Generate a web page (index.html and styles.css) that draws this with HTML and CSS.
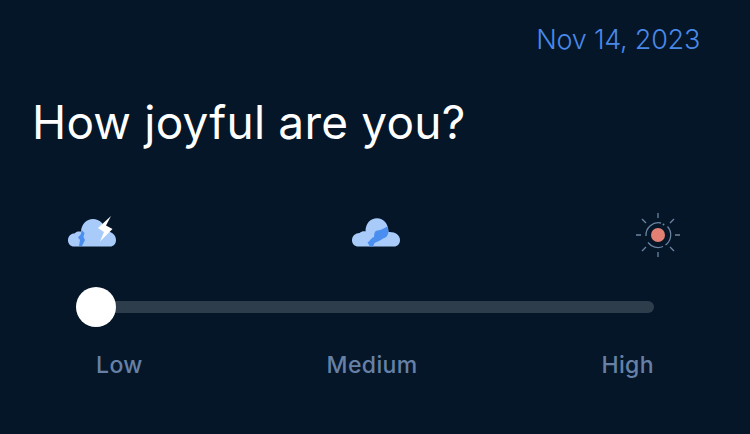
FILE: index.html
```html
<!DOCTYPE html>
<html lang="en">
  <head>
    <meta charset="UTF-8" />
    <meta name="viewport" content="width=device-width, initial-scale=1.0" />
    <title>Daily Mood</title>
    <link rel="stylesheet" href="styles.css">
  </head>
  <body>
    <div class="mood-card">
      <div class="date"><span>Nov 14, 2023</span></div>
      <h1 class="question"><span>How joyful are you?</span></h1>
      <div class="icons">
        <svg class="cloud" viewBox="0 0 48 32">
          <path d="M6 30.500C2.500 30.500 0 27.800 0 24.200C0 20.300 3 17.200 7 17.200C8 15.500 10 15.200 13 15.600C13.500 8 18.500 3 25 3C31.500 3 37 8 37.500 15C43 15 48 18.500 48 24C48 28 45.500 30.500 42 30.500Z" fill="#a9cbfa" />
          <path d="M13.500 14L13 18L10 21.500L12 24L11 30H14L17 24L15.500 21L16.500 17Z" fill="#4a8ff0" />
          <path d="M43 0L30 12L36 16L32 25.500L44.500 13L38 9.500Z" fill="#fff" />
        </svg>
        <svg class="cloud" viewBox="0 0 48 32">
          <path d="M6.500 30.500C2.500 30.500 0 27.800 0 24.200C0 20 3.500 17 7.500 17C9.500 15.200 11.500 15 13.500 15.400C13.500 7.500 18.500 2.300 25 2.300C31.500 2.300 36.500 8 36.500 16C43 15.500 48 19 48 24C48 28 45.500 30.500 42 30.500Z" fill="#a9cbfa" />
          <path d="M35.500 10.500C32 12 29 14.500 25.500 14.500C22 15 22.500 18 22 21C19 22 18 25 15.500 26.500L18 30.500H21L22.500 27L28 24.500L31 22.500C34 22 36 19.500 36.500 16Z" fill="#4a8ff0" />
        </svg>
        <svg class="sun" viewBox="0 0 44 44">
          <g fill="none" stroke="#6b84a0" stroke-width="1.300">
            <path d="M22 0V5M22 39V44M0 22H5M39 22H44M6 6L10 10M34 34L38 38M6 38L10 34M34 10L38 6" />
            <path d="M10 23A12.500 12.500 0 0 1 25 10M31.500 13.500A12.500 12.500 0 0 1 29.500 32M27 33.500A12.500 12.500 0 0 1 12 29.500" />
          </g>
          <circle cx="27.500" cy="11.500" r="1" fill="#6b84a0" />
          <circle cx="22" cy="22" r="7" fill="#e28074" />
        </svg>
      </div>
      <input class="slider" type="range" min="0" max="100" value="0" aria-label="Joy" />
      <div class="labels">
        <span class="low">Low</span>
        <span class="medium">Medium</span>
        <span class="high">High</span>
      </div>
    </div>
  </body>
</html>
```
FILE: styles.css
```css
body {
  font-family: Inter, "Liberation Sans", sans-serif;
  background-color: #041628;
  margin: 0;
}

.mood-card {
  box-sizing: border-box;
  height: 434px;
  padding: 20px 50px 0 32px;
  overflow: hidden;
}

.date {
  height: 40px;
  line-height: 40px;
  font-size: 27px;
  font-weight: 300;
  letter-spacing: -0.25px;
  text-align: right;
  color: #4a88e8;
}

.question {
  height: 60px;
  line-height: 60px;
  margin: 32px 0 0;
  font-size: 46px;
  font-weight: 400;
  letter-spacing: 0.2px;
  white-space: nowrap;
  color: #fff;
}

.icons {
  display: flex;
  justify-content: space-between;
  align-items: center;
  width: 612px;
  height: 44px;
  margin: 61px 0 0 36px;
}

.cloud {
  width: 48px;
  height: 32px;
  margin-top: -6px;
}

.sun {
  width: 44px;
  height: 44px;
}

.slider {
  -webkit-appearance: none;
  appearance: none;
  display: block;
  width: 578px;
  height: 12px;
  margin: 44px 0 0 44px;
  border-radius: 6px;
  background-color: #2e3d4c;
}

.slider::-webkit-slider-thumb {
  -webkit-appearance: none;
  width: 40px;
  height: 40px;
  border-radius: 50%;
  background-color: #fff;
}

.labels {
  display: flex;
  justify-content: space-between;
  width: 558px;
  margin: 37px 0 0 64px;
  line-height: 30px;
  font-size: 23px;
  font-weight: 500;
  letter-spacing: 0.4px;
  color: #6781a6;
}
```
